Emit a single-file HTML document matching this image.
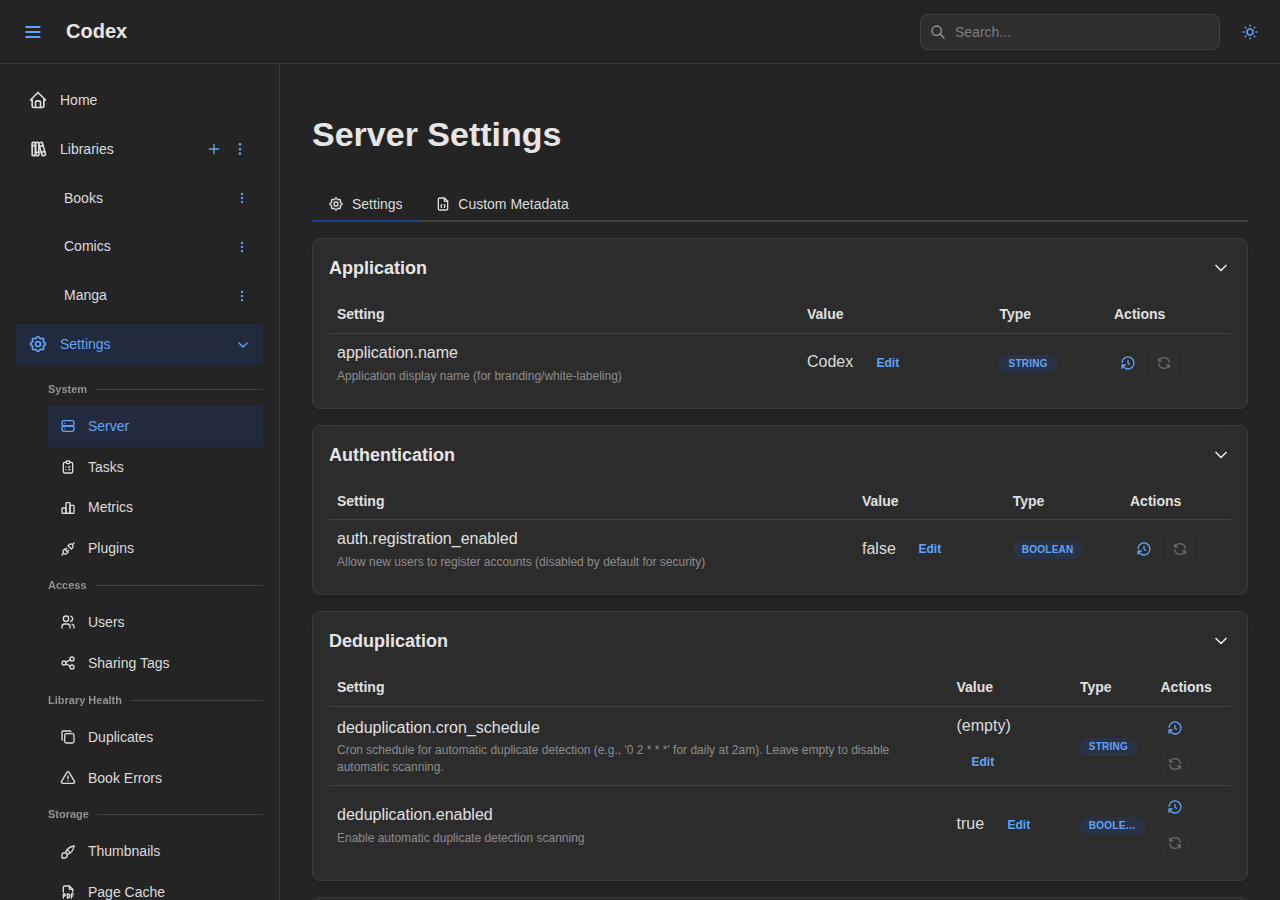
<!DOCTYPE html>
<html lang="en">
<head>
<meta charset="utf-8">
<title>Codex - Server Settings</title>
<style>
*{box-sizing:border-box;margin:0;padding:0}
html,body{width:1280px;height:900px;overflow:hidden;background:#242424;color:#c9c9c9;font-family:"Liberation Sans",sans-serif;font-size:16px;line-height:1.55}
svg{display:block;fill:none;stroke:currentColor;stroke-width:2;stroke-linecap:round;stroke-linejoin:round}
.abs{position:absolute}
/* header */
#header{position:absolute;left:0;top:0;width:1280px;height:64px;border-bottom:1px solid #373a40;background:#242424}
#burger{position:absolute;left:25px;top:24px;width:16px;height:16px;color:#60a5fa}
#brand{position:absolute;left:66px;top:15px;font-size:20px;font-weight:700;color:#e6e6e6;line-height:32px}
#search{position:absolute;left:920px;top:14px;width:300px;height:36px;border:1px solid #424242;border-radius:8px;background:#2e2e2e}
#search svg{position:absolute;left:9px;top:9px;width:16px;height:16px;color:#9c9c9c}
#search span{position:absolute;left:34px;top:0;line-height:34px;font-size:14px;color:#7d7d7d}
#sun{position:absolute;left:1241px;top:23px;width:18px;height:18px;color:#60a5fa}
/* navbar */
#nav{position:absolute;left:0;top:64px;width:280px;height:836px;border-right:1px solid #373a40;background:#242424}
.ni{position:absolute;left:16px;width:247px;height:40.8px;font-size:14px;color:#dcdcdc}
.ni .ic{position:absolute;left:12px;top:10.4px;width:20px;height:20px}
.ni .lb{position:absolute;left:44px;top:0;line-height:40.8px;white-space:nowrap}
.ni.act{background:#222a3d;color:#60a5fa}
.ni .r{position:absolute;top:12.4px;width:16px;height:16px;color:#60a5fa}
.si{position:absolute;left:48px;width:215px;height:40.8px;font-size:14px;color:#dcdcdc}
.si .ic{position:absolute;left:12px;top:12.4px;width:16px;height:16px}
.si .lb{position:absolute;left:40px;top:0;line-height:40.8px;white-space:nowrap}
.si.act{background:#222a3d;color:#60a5fa}
.dv{position:absolute;left:48px;width:215px;height:18px;font-size:11px;font-weight:700;color:#909296;line-height:18px;display:flex;align-items:center;white-space:nowrap}
.dv span{will-change:transform}
.dv i{display:block;flex:1;height:1px;background:#424242;margin-left:8px;position:relative}
/* main */
#title{position:absolute;left:312px;top:108px;font-size:34px;font-weight:700;color:#e6e6e6;line-height:52px;white-space:nowrap}
#tabs{position:absolute;left:312px;top:186px;width:936px;height:36px;border-bottom:2px solid #424242}
.tab{position:absolute;top:0;height:36px;font-size:14px;color:#dcdcdc;line-height:36px;white-space:nowrap}
.tab svg{position:absolute;top:10px;width:16px;height:16px}
.card{position:absolute;left:312px;width:936px;border:1px solid #373a40;border-radius:8px;background:#2c2c2c;box-shadow:0 1px 3px rgba(0,0,0,.05),0 10px 15px -5px rgba(0,0,0,.05),0 7px 7px -5px rgba(0,0,0,.04)}
.ct{position:absolute;left:16px;font-size:18px;font-weight:700;color:#e6e6e6;line-height:28px;white-space:nowrap}
.chev{position:absolute;left:897.9px;width:20px;height:20px;color:#e6e6e6}
.th{position:absolute;font-size:14px;font-weight:700;color:#e0e0e0;line-height:22px;white-space:nowrap}
.hl{position:absolute;left:16px;width:902px;height:1px;background:#424242}
.nm{position:absolute;left:24px;font-size:16px;color:#e0e0e0;line-height:24px;white-space:nowrap}
.ds{position:absolute;left:24px;font-size:12px;color:#8c8c8c;line-height:18px}
.val{position:absolute;font-size:16px;color:#dcdcdc;line-height:24px;white-space:nowrap}
.ed{position:absolute;font-size:12px;font-weight:700;color:#60a5fa;line-height:18px}
.bd{position:absolute;height:18px;border-radius:9px;background:#2a3245;color:#60a5fa;font-size:10px;font-weight:700;line-height:18px;padding:0 9.3px;letter-spacing:.25px;white-space:nowrap}
.ai{position:absolute;width:28px;height:28px;border-radius:4px}
.ai svg{position:absolute;left:6px;top:6px;width:16px;height:16px}
.ai.h{color:#60a5fa}
.ai.d{color:#676767;background:#2e2e2e}
</style>
</head>
<body>
<div id="header">
  <svg id="burger" viewBox="0 0 16 16" style="fill:currentColor;stroke:none"><rect x=".4" y="2" width="15" height="2" rx=".6"/><rect x=".4" y="7" width="15" height="2" rx=".6"/><rect x=".4" y="12" width="15" height="2" rx=".6"/></svg>
  <div id="brand">Codex</div>
  <div id="search"><svg viewBox="0 0 24 24"><path d="M10 10m-7 0a7 7 0 1 0 14 0a7 7 0 1 0 -14 0"/><path d="M21 21l-6 -6"/></svg><span>Search...</span></div>
  <svg id="sun" viewBox="0 0 24 24"><path d="M12 12m-4 0a4 4 0 1 0 8 0a4 4 0 1 0 -8 0"/><path d="M3 12h1m8 -9v1m8 8h1m-9 8v1m-6.4 -15.4l.7 .7m12.1 -.7l-.7 .7m0 11.4l.7 .7m-12.1 -.7l-.7 .7"/></svg>
</div>
<div id="nav">
  <div class="ni" style="top:16px"><svg class="ic" viewBox="0 0 24 24"><path d="M5 12l-2 0l9 -9l9 9l-2 0"/><path d="M5 12v7a2 2 0 0 0 2 2h10a2 2 0 0 0 2 -2v-7"/><path d="M9 21v-6a2 2 0 0 1 2 -2h2a2 2 0 0 1 2 2v6"/></svg><span class="lb">Home</span></div>
  <div class="ni" style="top:64.8px"><svg class="ic" viewBox="0 0 24 24"><path d="M5 4m0 1a1 1 0 0 1 1 -1h2a1 1 0 0 1 1 1v14a1 1 0 0 1 -1 1h-2a1 1 0 0 1 -1 -1z"/><path d="M9 4m0 1a1 1 0 0 1 1 -1h2a1 1 0 0 1 1 1v14a1 1 0 0 1 -1 1h-2a1 1 0 0 1 -1 -1z"/><path d="M5 8h4"/><path d="M9 16h4"/><path d="M13.803 4.56l2.184 -.53c.562 -.135 1.133 .19 1.282 .732l3.695 13.418a1.02 1.02 0 0 1 -.634 1.219l-.133 .041l-2.184 .53c-.562 .135 -1.133 -.19 -1.282 -.732l-3.695 -13.418a1.02 1.02 0 0 1 .634 -1.219l.133 -.041z"/><path d="M14 9l4 -1"/><path d="M16 16l3.923 -.98"/></svg><span class="lb">Libraries</span>
    <svg class="r" style="left:190px" viewBox="0 0 24 24"><path d="M12 5l0 14"/><path d="M5 12l14 0"/></svg>
    <svg class="r dots" style="left:216px" viewBox="0 0 24 24"><path d="M12 12m-1 0a1 1 0 1 0 2 0a1 1 0 1 0 -2 0"/><path d="M12 19m-1 0a1 1 0 1 0 2 0a1 1 0 1 0 -2 0"/><path d="M12 5m-1 0a1 1 0 1 0 2 0a1 1 0 1 0 -2 0"/></svg></div>
  <div class="ni" style="top:113.6px"><span class="lb" style="left:48px">Books</span><svg class="r dots" style="left:219px;top:13.4px;width:14px;height:14px" viewBox="0 0 24 24"><path d="M12 12m-1 0a1 1 0 1 0 2 0a1 1 0 1 0 -2 0"/><path d="M12 19m-1 0a1 1 0 1 0 2 0a1 1 0 1 0 -2 0"/><path d="M12 5m-1 0a1 1 0 1 0 2 0a1 1 0 1 0 -2 0"/></svg></div>
  <div class="ni" style="top:162.4px"><span class="lb" style="left:48px">Comics</span><svg class="r dots" style="left:219px;top:13.4px;width:14px;height:14px" viewBox="0 0 24 24"><path d="M12 12m-1 0a1 1 0 1 0 2 0a1 1 0 1 0 -2 0"/><path d="M12 19m-1 0a1 1 0 1 0 2 0a1 1 0 1 0 -2 0"/><path d="M12 5m-1 0a1 1 0 1 0 2 0a1 1 0 1 0 -2 0"/></svg></div>
  <div class="ni" style="top:211.2px"><span class="lb" style="left:48px">Manga</span><svg class="r dots" style="left:219px;top:13.4px;width:14px;height:14px" viewBox="0 0 24 24"><path d="M12 12m-1 0a1 1 0 1 0 2 0a1 1 0 1 0 -2 0"/><path d="M12 19m-1 0a1 1 0 1 0 2 0a1 1 0 1 0 -2 0"/><path d="M12 5m-1 0a1 1 0 1 0 2 0a1 1 0 1 0 -2 0"/></svg></div>
  <div class="ni act" style="top:260px"><svg class="ic" viewBox="0 0 24 24"><path d="M10.325 4.317c.426 -1.756 2.924 -1.756 3.35 0a1.724 1.724 0 0 0 2.573 1.066c1.543 -.94 3.31 .826 2.37 2.37a1.724 1.724 0 0 0 1.065 2.572c1.756 .426 1.756 2.924 0 3.35a1.724 1.724 0 0 0 -1.066 2.573c.94 1.543 -.826 3.31 -2.37 2.37a1.724 1.724 0 0 0 -2.572 1.065c-.426 1.756 -2.924 1.756 -3.35 0a1.724 1.724 0 0 0 -2.573 -1.066c-1.543 .94 -3.31 -.826 -2.37 -2.37a1.724 1.724 0 0 0 -1.065 -2.572c-1.756 -.426 -1.756 -2.924 0 -3.35a1.724 1.724 0 0 0 1.066 -2.573c-.94 -1.543 .826 -3.31 2.37 -2.37c1 .608 2.296 .07 2.572 -1.065z"/><path d="M9 12a3 3 0 1 0 6 0a3 3 0 0 0 -6 0"/></svg><span class="lb">Settings</span><svg class="r" style="left:218.8px;top:12.8px;width:16px;height:16px" viewBox="0 0 24 24" stroke-width="1.5"><path d="M6 9l6 6l6 -6"/></svg></div>
  <div class="dv" style="top:316px"><span>System</span><i></i></div>
  <div class="si act" style="top:342px"><svg class="ic" viewBox="0 0 24 24"><path d="M3 4m0 3a3 3 0 0 1 3 -3h12a3 3 0 0 1 3 3v2a3 3 0 0 1 -3 3h-12a3 3 0 0 1 -3 -3z"/><path d="M3 12m0 3a3 3 0 0 1 3 -3h12a3 3 0 0 1 3 3v2a3 3 0 0 1 -3 3h-12a3 3 0 0 1 -3 -3z"/><path d="M7 8l0 .01"/><path d="M7 16l0 .01"/></svg><span class="lb">Server</span></div>
  <div class="si" style="top:382.8px"><svg class="ic" viewBox="0 0 24 24"><path d="M9 5h-2a2 2 0 0 0 -2 2v12a2 2 0 0 0 2 2h10a2 2 0 0 0 2 -2v-12a2 2 0 0 0 -2 -2h-2"/><path d="M9 3m0 2a2 2 0 0 1 2 -2h2a2 2 0 0 1 2 2v0a2 2 0 0 1 -2 2h-2a2 2 0 0 1 -2 -2z"/><path d="M9 12l.01 0"/><path d="M13 12l2 0"/><path d="M9 16l.01 0"/><path d="M13 16l2 0"/></svg><span class="lb">Tasks</span></div>
  <div class="si" style="top:423.6px"><svg class="ic" viewBox="0 0 24 24"><path d="M3 13a1 1 0 0 1 1 -1h4a1 1 0 0 1 1 1v6a1 1 0 0 1 -1 1h-4a1 1 0 0 1 -1 -1z"/><path d="M15 9a1 1 0 0 1 1 -1h4a1 1 0 0 1 1 1v10a1 1 0 0 1 -1 1h-4a1 1 0 0 1 -1 -1z"/><path d="M9 5a1 1 0 0 1 1 -1h4a1 1 0 0 1 1 1v14a1 1 0 0 1 -1 1h-4a1 1 0 0 1 -1 -1z"/><path d="M4 20h14"/></svg><span class="lb" style="top:-1px">Metrics</span></div>
  <div class="si" style="top:464.4px"><svg class="ic" viewBox="0 0 24 24"><path d="M7 12l5 5l-1.500 1.500a3.536 3.536 0 1 1 -5 -5l1.500 -1.500z"/><path d="M17 12l-5 -5l1.500 -1.500a3.536 3.536 0 1 1 5 5l-1.500 1.500z"/><path d="M3 21l2.500 -2.500"/><path d="M18.500 5.500l2.500 -2.500"/><path d="M10 11l-2 2"/><path d="M13 14l-2 2"/></svg><span class="lb">Plugins</span></div>
  <div class="dv" style="top:512px"><span>Access</span><i></i></div>
  <div class="si" style="top:537.6px"><svg class="ic" viewBox="0 0 24 24"><path d="M9 7m-4 0a4 4 0 1 0 8 0a4 4 0 1 0 -8 0"/><path d="M3 21v-2a4 4 0 0 1 4 -4h4a4 4 0 0 1 4 4v2"/><path d="M16 3.130a4 4 0 0 1 0 7.750"/><path d="M21 21v-2a4 4 0 0 0 -3 -3.850"/></svg><span class="lb">Users</span></div>
  <div class="si" style="top:578.4px"><svg class="ic" viewBox="0 0 24 24"><path d="M6 12m-3 0a3 3 0 1 0 6 0a3 3 0 1 0 -6 0"/><path d="M18 6m-3 0a3 3 0 1 0 6 0a3 3 0 1 0 -6 0"/><path d="M18 18m-3 0a3 3 0 1 0 6 0a3 3 0 1 0 -6 0"/><path d="M8.700 10.700l6.600 -3.400"/><path d="M8.700 13.300l6.600 3.400"/></svg><span class="lb" style="top:1px">Sharing Tags</span></div>
  <div class="dv" style="top:626.8px"><span>Library Health</span><i style="top:1px"></i></div>
  <div class="si" style="top:652.4px"><svg class="ic" viewBox="0 0 24 24"><path d="M7 7m0 2.667a2.667 2.667 0 0 1 2.667 -2.667h8.666a2.667 2.667 0 0 1 2.667 2.667v8.666a2.667 2.667 0 0 1 -2.667 2.667h-8.666a2.667 2.667 0 0 1 -2.667 -2.667z"/><path d="M4.012 16.737a2.005 2.005 0 0 1 -1.012 -1.737v-10c0 -1.100 .900 -2 2 -2h10c.750 0 1.158 .385 1.500 1"/></svg><span class="lb" style="top:1px">Duplicates</span></div>
  <div class="si" style="top:693.2px"><svg class="ic" viewBox="0 0 24 24"><path d="M12 9v4"/><path d="M10.363 3.591l-8.106 13.534a1.914 1.914 0 0 0 1.636 2.871h16.214a1.914 1.914 0 0 0 1.636 -2.870l-8.106 -13.536a1.914 1.914 0 0 0 -3.274 0z"/><path d="M12 16h.01"/></svg><span class="lb" style="top:1px">Book Errors</span></div>
  <div class="dv" style="top:741.6px"><span style="position:relative;top:-1px">Storage</span><i></i></div>
  <div class="si" style="top:767.2px"><svg class="ic" viewBox="0 0 24 24"><path d="M3 21v-4a4 4 0 1 1 4 4h-4"/><path d="M21 3a16 16 0 0 0 -12.800 10.200"/><path d="M21 3a16 16 0 0 1 -10.200 12.800"/><path d="M10.600 9a9 9 0 0 1 4.400 4.400"/></svg><span class="lb">Thumbnails</span></div>
  <div class="si" style="top:808px"><svg class="ic" viewBox="0 0 24 24"><path d="M14 3v4a1 1 0 0 0 1 1h4"/><path d="M5 12v-7a2 2 0 0 1 2 -2h7l5 5v4"/><path d="M5 18h1.500a1.500 1.500 0 0 0 0 -3h-1.500v6"/><path d="M17 18h2"/><path d="M20 15h-3v6"/><path d="M11 15v6h1a2 2 0 0 0 2 -2v-2a2 2 0 0 0 -2 -2h-1z"/></svg><span class="lb">Page Cache</span></div>
</div>
<div id="main">
  <div id="title">Server Settings</div>
  <div id="tabs">
    <div class="tab" style="left:0;width:107px"><svg style="left:16px" viewBox="0 0 24 24"><path d="M10.325 4.317c.426 -1.756 2.924 -1.756 3.35 0a1.724 1.724 0 0 0 2.573 1.066c1.543 -.94 3.31 .826 2.37 2.37a1.724 1.724 0 0 0 1.065 2.572c1.756 .426 1.756 2.924 0 3.35a1.724 1.724 0 0 0 -1.066 2.573c.94 1.543 -.826 3.31 -2.37 2.37a1.724 1.724 0 0 0 -2.572 1.065c-.426 1.756 -2.924 1.756 -3.35 0a1.724 1.724 0 0 0 -2.573 -1.066c-1.543 .94 -3.31 -.826 -2.37 -2.37a1.724 1.724 0 0 0 -1.065 -2.572c-1.756 -.426 -1.756 -2.924 0 -3.35a1.724 1.724 0 0 0 1.066 -2.573c-.94 -1.543 .826 -3.31 2.37 -2.37c1 .608 2.296 .07 2.572 -1.065z"/><path d="M9 12a3 3 0 1 0 6 0a3 3 0 0 0 -6 0"/></svg><span style="position:absolute;left:40px">Settings</span><i style="position:absolute;left:0;top:34px;width:107px;height:2px;background:#1e3a8a"></i></div>
    <div class="tab" style="left:107px"><svg style="left:16px" viewBox="0 0 24 24"><path d="M14 3v4a1 1 0 0 0 1 1h4"/><path d="M17 21h-10a2 2 0 0 1 -2 -2v-14a2 2 0 0 1 2 -2h7l5 5v11a2 2 0 0 1 -2 2z"/><path d="M10 13l-1 2l1 2"/><path d="M14 13l1 2l-1 2"/></svg><span style="position:absolute;left:39.3px">Custom Metadata</span></div>
  </div>

  <div class="card" style="top:238px;height:171px">
    <div class="ct" style="top:14.5px">Application</div><svg class="chev" style="top:18.8px" viewBox="0 0 24 24"><path d="M6 9l6 6l6 -6"/></svg>
    <div class="th" style="left:24px;top:64px">Setting</div><div class="th" style="left:494px;top:64px">Value</div><div class="th" style="left:686.4px;top:64px">Type</div><div class="th" style="left:801px;top:64px">Actions</div><div class="hl" style="top:94px"></div>
    <div class="nm" style="top:101.5px">application.name</div>
    <div class="ds" style="top:128px">Application display name (for branding/white-labeling)</div>
    <div class="val" style="left:494px;top:110.5px">Codex</div><div class="ed" style="left:563.5px;top:114.5px">Edit</div>
    <div class="bd" style="left:686px;top:116px;padding:0 9.1px 0 9.5px">STRING</div>
    <div class="ai h" style="left:800.5px;top:109.5px"><svg viewBox="0 0 24 24"><path d="M12 8l0 4l2 2"/><path d="M3.05 11a9 9 0 1 1 .5 4m-.5 5v-5h5"/></svg></div><div class="ai d" style="left:836.5px;top:109.5px"><svg viewBox="0 0 24 24"><path d="M20 11a8.100 8.100 0 0 0 -15.500 -2m-.500 -4v4h4"/><path d="M4 13a8.100 8.100 0 0 0 15.500 2m.500 4v-4h-4"/></svg></div>
  </div>

  <div class="card" style="top:425px;height:170px">
    <div class="ct" style="top:14.5px">Authentication</div><svg class="chev" style="top:18.8px" viewBox="0 0 24 24"><path d="M6 9l6 6l6 -6"/></svg>
    <div class="th" style="left:24px;top:64px">Setting</div><div class="th" style="left:549px;top:64px">Value</div><div class="th" style="left:699.7px;top:64px">Type</div><div class="th" style="left:817px;top:64px">Actions</div><div class="hl" style="top:93px"></div>
    <div class="nm" style="top:100.5px">auth.registration_enabled</div>
    <div class="ds" style="top:127px">Allow new users to register accounts (disabled by default for security)</div>
    <div class="val" style="left:549px;top:110.5px">false</div><div class="ed" style="left:605.5px;top:113.5px">Edit</div>
    <div class="bd" style="left:700px;top:115px;padding:0 8.8px">BOOLEAN</div>
    <div class="ai h" style="left:816.5px;top:108.5px"><svg viewBox="0 0 24 24"><path d="M12 8l0 4l2 2"/><path d="M3.05 11a9 9 0 1 1 .5 4m-.5 5v-5h5"/></svg></div><div class="ai d" style="left:852.5px;top:108.5px"><svg viewBox="0 0 24 24"><path d="M20 11a8.100 8.100 0 0 0 -15.500 -2m-.500 -4v4h4"/><path d="M4 13a8.100 8.100 0 0 0 15.500 2m.500 4v-4h-4"/></svg></div>
  </div>

  <div class="card" style="top:611px;height:270px">
    <div class="ct" style="top:14.5px">Deduplication</div><svg class="chev" style="top:18.8px" viewBox="0 0 24 24"><path d="M6 9l6 6l6 -6"/></svg>
    <div class="th" style="left:24px;top:64px">Setting</div><div class="th" style="left:643.5px;top:64px">Value</div><div class="th" style="left:767px;top:64px">Type</div><div class="th" style="left:847.5px;top:64px">Actions</div><div class="hl" style="top:94px"></div>
    <div class="nm" style="top:103.5px">deduplication.cron_schedule</div>
    <div class="ds" style="top:129.7px;width:600px;line-height:17.4px">Cron schedule for automatic duplicate detection (e.g., '0 2 * * *' for daily at 2am). Leave empty to disable automatic scanning.</div>
    <div class="val" style="left:643.5px;top:101.5px">(empty)</div><div class="ed" style="left:658.5px;top:140.5px">Edit</div>
    <div class="bd" style="left:767px;top:126px;padding:0 8.8px">STRING</div>
    <div class="ai h" style="left:848px;top:102px"><svg viewBox="0 0 24 24"><path d="M12 8l0 4l2 2"/><path d="M3.05 11a9 9 0 1 1 .5 4m-.5 5v-5h5"/></svg></div><div class="ai d" style="left:848px;top:138px"><svg viewBox="0 0 24 24"><path d="M20 11a8.100 8.100 0 0 0 -15.500 -2m-.500 -4v4h4"/><path d="M4 13a8.100 8.100 0 0 0 15.500 2m.500 4v-4h-4"/></svg></div>
    <div class="hl" style="top:173px"></div>
    <div class="nm" style="top:190.5px">deduplication.enabled</div>
    <div class="ds" style="top:217px">Enable automatic duplicate detection scanning</div>
    <div class="val" style="left:643.5px;top:200px">true</div><div class="ed" style="left:694.5px;top:204px">Edit</div>
    <div class="bd" style="left:767px;top:204.5px;padding:0 8.8px">BOOLE&hellip;</div>
    <div class="ai h" style="left:848px;top:181px"><svg viewBox="0 0 24 24"><path d="M12 8l0 4l2 2"/><path d="M3.05 11a9 9 0 1 1 .5 4m-.5 5v-5h5"/></svg></div><div class="ai d" style="left:848px;top:217px"><svg viewBox="0 0 24 24"><path d="M20 11a8.100 8.100 0 0 0 -15.500 -2m-.500 -4v4h4"/><path d="M4 13a8.100 8.100 0 0 0 15.500 2m.500 4v-4h-4"/></svg></div>
  </div>

  <div class="card" style="top:897px;height:100px"></div>
</div>
</body>
</html>
